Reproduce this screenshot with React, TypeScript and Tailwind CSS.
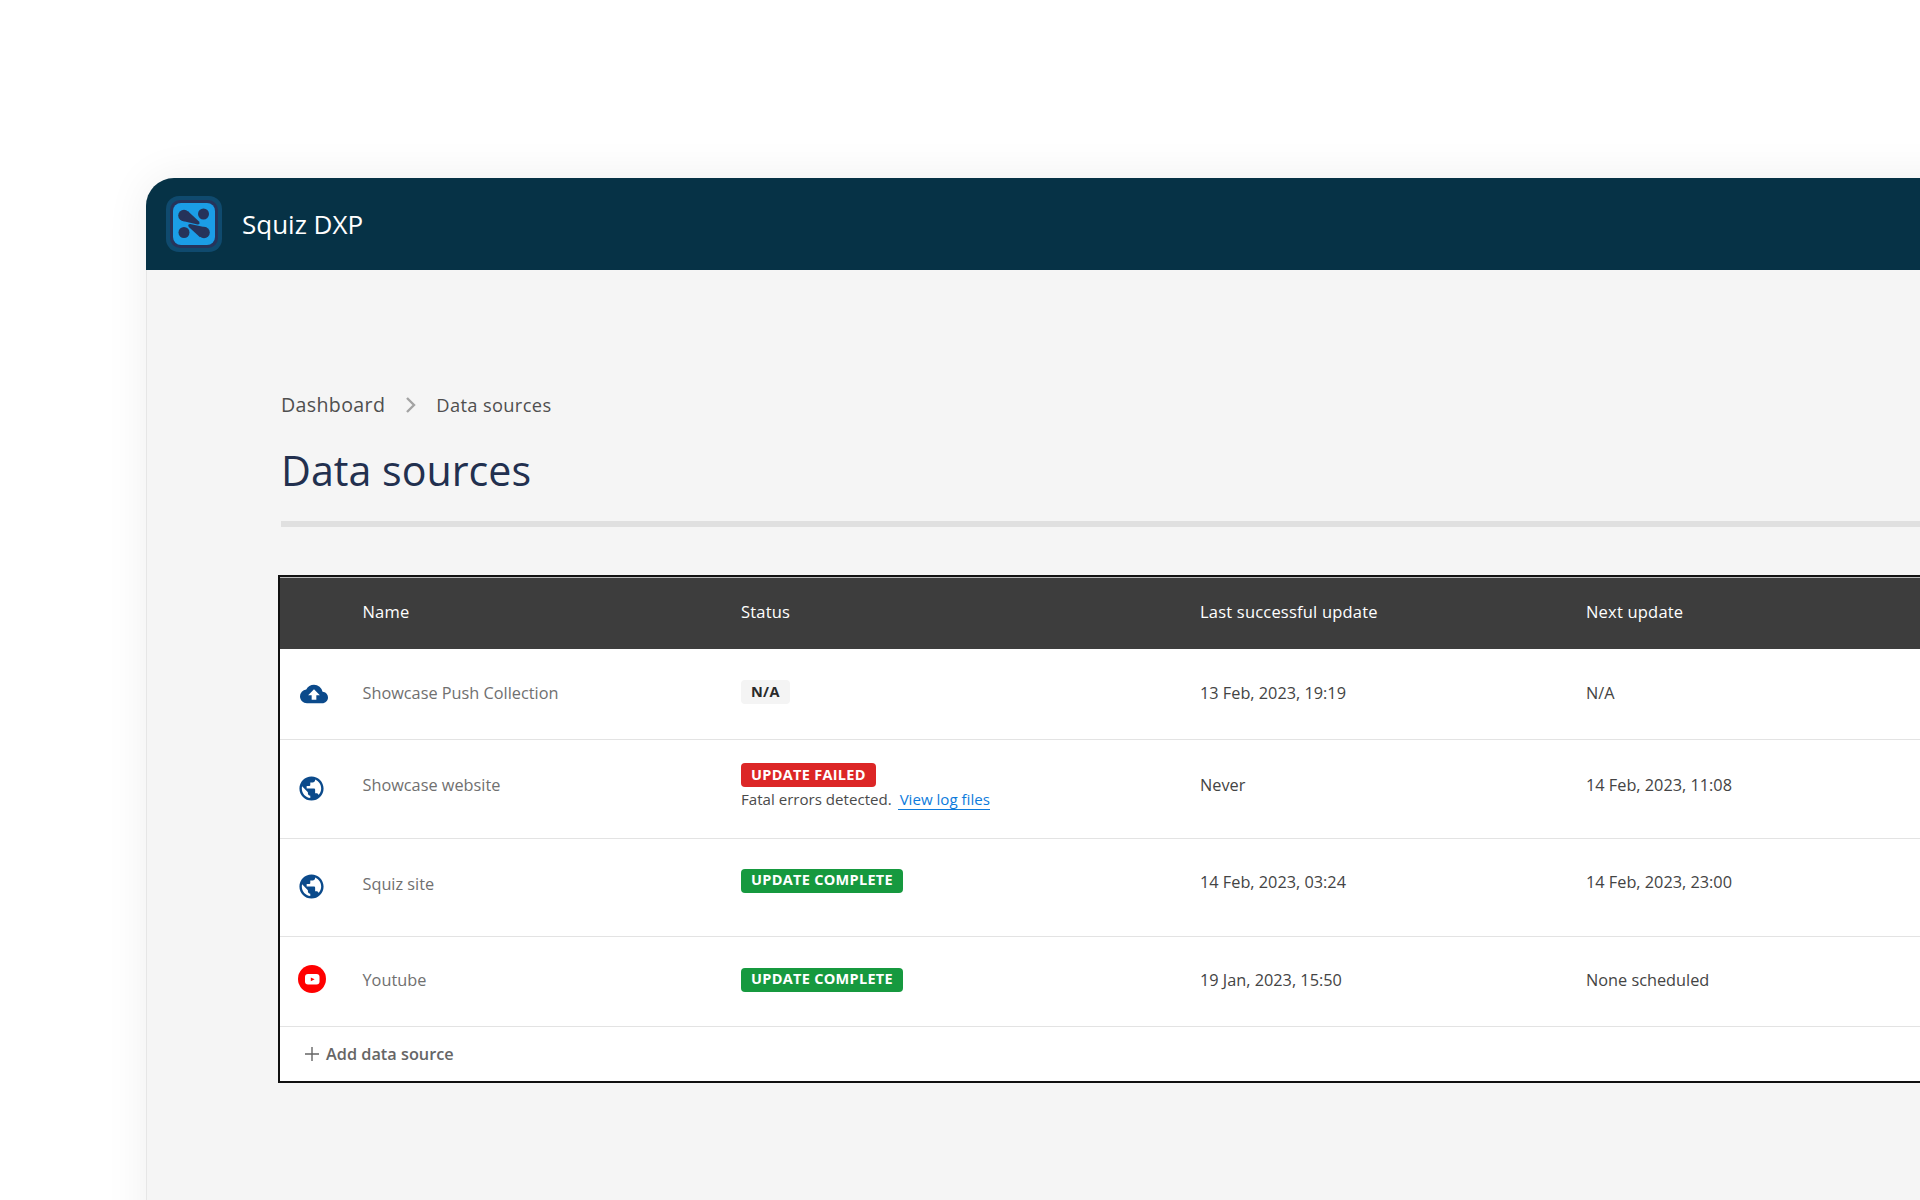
import React from "react";
import { MdCloudUpload, MdPublic } from "react-icons/md";

const font = { fontFamily: '"Open Sans", "Noto Sans", sans-serif' };

function Logo() {
  const c = "#26335a";
  return (
    <svg width="56" height="56" viewBox="0 0 56 56" className="shrink-0">
      <rect x="0" y="0" width="56" height="56" rx="13" fill="#0f4a6e" />
      <rect x="4" y="4" width="48" height="48" rx="10" fill={c} />
      <rect x="7" y="7" width="42" height="42" rx="8" fill="#1b9de6" />
      <circle cx="18" cy="19.5" r="5.8" fill={c} />
      <path d="M22 15.3L33 25.6Q34.6 28.4 31.6 28.6L15.6 24.8Z" fill={c} />
      <circle cx="37.5" cy="18" r="5.5" fill={c} />
      <circle cx="18" cy="36.5" r="5.5" fill={c} />
      <circle cx="38" cy="36.5" r="5.8" fill={c} />
      <path d="M34 41.2L22.8 31Q21.2 28.2 24.2 28L40.4 31.6Z" fill={c} />
    </svg>
  );
}

function YoutubeIcon() {
  return (
    <svg width="28" height="28" viewBox="0 0 28 28" className="block">
      <circle cx="14" cy="14" r="14" fill="#ff0000" />
      <rect x="7" y="9" width="14.5" height="10.5" rx="3" fill="#fff" />
      <path d="M12.8 12.4l3.8 1.9-3.8 1.9z" fill="#ff0000" />
    </svg>
  );
}

function Badge({ text, cls }: { text: string; cls: string }) {
  return (
    <span className={`inline-flex h-[24px] items-center rounded-[4px] px-[10px] text-[14.5px] font-bold tracking-[0.3px] leading-none ${cls}`}>
      {text}
    </span>
  );
}

const gridCols = "grid grid-cols-[82.5px_378.5px_459px_386px_1fr]";

type Row = {
  icon: React.ReactNode;
  iconCls: string;
  name: string;
  nameCls: string;
  status: React.ReactNode;
  statusCls: string;
  last: string;
  next: string;
  dateCls: string;
  heightCls: string;
};

const rows: Row[] = [
  {
    icon: <MdCloudUpload size={28} color="#0b4a8b" className="block" />,
    iconCls: "pl-[20px] pb-[1px]",
    name: "Showcase Push Collection",
    nameCls: "pb-[1px]",
    status: <Badge text="N/A" cls="bg-[#f4f4f4] text-[#2a2a2a]" />,
    statusCls: "pb-[5px]",
    last: "13 Feb, 2023, 19:19",
    next: "N/A",
    dateCls: "pb-[1px]",
    heightCls: "h-[91px]",
  },
  {
    icon: <MdPublic size={29} color="#0b4a8b" className="block" />,
    iconCls: "pl-[16.5px] pb-[2px]",
    name: "Showcase website",
    nameCls: "pb-[7px]",
    status: (
      <div className="pb-[5px]">
        <Badge text="UPDATE FAILED" cls="bg-[#dc2626] text-white" />
        <div className="text-[15.1px] leading-[24px] text-[#4a4a4a]">
          Fatal errors detected.{" "}
          <a className="ml-[2px] inline-block border-b border-[#0d7bdc] pl-[2px] leading-[19px] text-[#0d7bdc]">View log files</a>
        </div>
      </div>
    ),
    statusCls: "",
    last: "Never",
    next: "14 Feb, 2023, 11:08",
    dateCls: "pb-[7px]",
    heightCls: "h-[99px]",
  },
  {
    icon: <MdPublic size={29} color="#0b4a8b" className="block" />,
    iconCls: "pl-[16.5px] pb-[2px]",
    name: "Squiz site",
    nameCls: "pb-[7px]",
    status: <Badge text="UPDATE COMPLETE" cls="bg-[#16993f] text-white" />,
    statusCls: "pb-[15px]",
    last: "14 Feb, 2023, 03:24",
    next: "14 Feb, 2023, 23:00",
    dateCls: "pb-[11px]",
    heightCls: "h-[98px]",
  },
  {
    icon: <YoutubeIcon />,
    iconCls: "pl-[17.5px] pb-[6px]",
    name: "Youtube",
    nameCls: "pb-[3px]",
    status: <Badge text="UPDATE COMPLETE" cls="bg-[#16993f] text-white" />,
    statusCls: "pb-[5px]",
    last: "19 Jan, 2023, 15:50",
    next: "None scheduled",
    dateCls: "pb-[3px]",
    heightCls: "h-[90px]",
  },
];

export default function App() {
  return (
    <div className="h-[1200px] w-[1920px] overflow-hidden bg-white pl-[146px] pt-[178px]" style={font}>
      <div className="h-[1100px] w-[1900px] rounded-tl-[28px] border-l border-[#e6e6e6] bg-[#f5f5f5] shadow-[0_0_44px_rgba(0,0,0,0.07)]">
        <header className="-ml-px flex h-[92px] items-center gap-[20px] rounded-tl-[28px] bg-[#063246] pl-[20px]">
          <Logo />
          <span className="text-[26px] font-medium text-white">Squiz DXP</span>
        </header>
        <main className="pl-[134px] pt-[117px]">
          <nav className="flex h-[36px] items-center tracking-[0.35px] text-[#4f4f4f]">
            <span className="text-[19.6px]">Dashboard</span>
            <svg width="12" height="18" viewBox="0 0 12 18" className="ml-[20px] mr-[19px]">
              <path d="M2 2l7 7-7 7" fill="none" stroke="#a3a3a3" strokeWidth="2.4" />
            </svg>
            <span className="text-[18.3px]">Data sources</span>
          </nav>
          <h1 className="mt-[19px] text-[41.2px] font-normal leading-[57px] text-[#22304f]">Data sources</h1>
          <div className="mt-[22px] h-[6px] bg-[#e0e0e0]" />
          <div className="-ml-[3px] mt-[48px] border-2 border-r-0 border-[#111] bg-white">
            <div className={`${gridCols} h-[72px] items-center border-t border-[#bbb] bg-[#3d3d3d] pb-[3px] text-[16.5px] font-medium tracking-[0.2px] text-white`}>
              <div />
              <div>Name</div>
              <div>Status</div>
              <div>Last successful update</div>
              <div>Next update</div>
            </div>
            {rows.map((r) => (
              <div key={r.name} className={`${gridCols} ${r.heightCls} items-center border-b border-[#e3e3e3] text-[16.3px]`}>
                <div className={r.iconCls}>{r.icon}</div>
                <div className={`text-[#707070] ${r.nameCls}`}>{r.name}</div>
                <div className={r.statusCls}>{r.status}</div>
                <div className={`text-[#444] ${r.dateCls}`}>{r.last}</div>
                <div className={`text-[#444] ${r.dateCls}`}>{r.next}</div>
              </div>
            ))}
            <div className="flex h-[54px] items-center pl-[24px] text-[16.3px] font-semibold text-[#666]">
              <svg width="16" height="16" viewBox="0 0 16 16" className="mr-[6px]">
                <path d="M8 1v14M1 8h14" stroke="#666" strokeWidth="1.4" fill="none" />
              </svg>
              Add data source
            </div>
          </div>
        </main>
      </div>
    </div>
  );
}
